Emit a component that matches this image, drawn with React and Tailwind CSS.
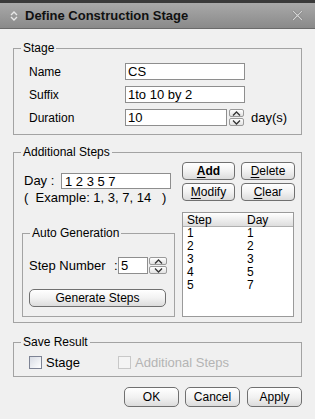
import React from "react";

const F = { fontFamily: '"Liberation Sans", Arial, sans-serif' };

function Btn({ children, className = "" }) {
  return (
    <div
      className={
        "flex items-center justify-center rounded-[4px] border border-[#707070] bg-gradient-to-b from-[#ffffff] via-[#f2f2f2] to-[#dcdcdc] text-[12px] leading-none text-black " +
        className
      }
    >
      {children}
    </div>
  );
}

function Chev({ up }) {
  return (
    <svg width="9" height="5" viewBox="0 0 9 5">
      <path
        d={up ? "M1 4.5 L4.5 1 L8 4.5" : "M1 0.5 L4.5 4 L8 0.5"}
        fill="none"
        stroke="#333"
        strokeWidth="1.3"
      />
    </svg>
  );
}

function Spinner({ className = "" }) {
  return (
    <div className={"flex flex-col gap-[1px] " + className}>
      <div className="flex flex-1 items-center justify-center rounded-[2px] border border-[#9a9a9a] bg-gradient-to-b from-white to-[#e2e2e2]">
        <Chev up />
      </div>
      <div className="flex flex-1 items-center justify-center rounded-[2px] border border-[#9a9a9a] bg-gradient-to-b from-white to-[#e2e2e2]">
        <Chev />
      </div>
    </div>
  );
}

function Input({ value, className = "" }) {
  return (
    <div
      className={
        "flex items-center border border-[#8e8e8e] bg-white pl-[2px] text-[13px] leading-none text-black " +
        className
      }
    >
      {value}
    </div>
  );
}

function Legend({ children }) {
  return (
    <legend className="ml-[7px] px-[2px] text-[12px] leading-[14px] text-black">
      {children}
    </legend>
  );
}

function Check({ disabled }) {
  return (
    <div
      className={
        "h-[13px] w-[13px] border " +
        (disabled
          ? "border-[#c8c8c8] bg-[#f4f4f4]"
          : "border-[#7d8394] bg-gradient-to-br from-[#d8dce4] to-white")
      }
    />
  );
}

export default function App() {
  return (
    <div className="h-[419px] w-[315px] overflow-hidden bg-[#f0f0f0] text-[12px] text-black" style={F}>
      {/* Title bar */}
      <div className="flex h-[29px] items-center border-t-[3px] border-b border-t-[#3a3a3a] border-b-[#6a6a6a] bg-gradient-to-b from-[#a9a9a9] to-[#8a8a8a] pl-[10px] pr-[11px]">
        <svg width="8" height="10" viewBox="0 0 8 10">
          <path d="M1 4 L4 1 L7 4" fill="none" stroke="#e8e8e8" strokeWidth="1.4" />
          <path d="M1 6 L4 9 L7 6" fill="none" stroke="#e8e8e8" strokeWidth="1.4" />
        </svg>
        <span className="ml-[7px] text-[13px] font-bold leading-none text-[#111]">
          Define Construction Stage
        </span>
        <svg className="ml-auto" width="13" height="11" viewBox="0 0 13 11">
          <path d="M2 1 L11 10 M11 1 L2 10" stroke="#6e6e6e" strokeWidth="2.2" />
          <path d="M2 1 L11 10 M11 1 L2 10" stroke="#d4d4d4" strokeWidth="1.2" />
        </svg>
      </div>

      <div className="px-[13px]">
        {/* Stage */}
        <fieldset className="mt-[12px] border border-[#a3a3a3] pb-[8px] pt-[8px]">
          <Legend>Stage</Legend>
          <div className="flex flex-col gap-[6px] pl-[15px]">
            <div className="flex h-[17px] items-center">
              <span className="w-[96px]">Name</span>
              <Input value="CS" className="h-[17px] w-[120px]" />
            </div>
            <div className="flex h-[17px] items-center">
              <span className="w-[96px]">Suffix</span>
              <Input value="1to 10 by 2" className="h-[17px] w-[120px]" />
            </div>
            <div className="flex h-[17px] items-center">
              <span className="w-[96px]">Duration</span>
              <Input value="10" className="h-[17px] w-[102px]" />
              <Spinner className="ml-[2px] h-[17px] w-[15px]" />
              <span className="ml-[7px] text-[13px]">day(s)</span>
            </div>
          </div>
        </fieldset>

        {/* Additional Steps */}
        <fieldset className="mt-[10px] border border-[#a3a3a3] pb-[5px]">
          <Legend>Additional Steps</Legend>
          <div className="flex">
            <div className="ml-[8px] flex w-[153px] flex-col pt-[14px]">
              <div className="flex h-[16px] items-center pl-[2px]">
                <span className="w-[37px] text-[13px]">Day :</span>
                <Input value="1 2 3 5 7" className="h-[16px] w-[110px] pl-[3px]" />
              </div>
              <div className="mt-[2px] whitespace-pre pl-[2px] text-[13px] leading-[14px]">
                {"(  Example: 1, 3, 7, 14   )"}
              </div>
              <fieldset className="mt-[21px] h-[91px] border border-[#a3a3a3] pt-[17px]">
                <Legend>Auto Generation</Legend>
                <div className="flex h-[17px] items-center pl-[6px]">
                  <span className="w-[85px] text-[13px]">Step Number</span>
                  <span className="w-[4px] text-[13px]">:</span>
                  <Input value="5" className="h-[17px] w-[30px]" />
                  <Spinner className="ml-[1px] h-[17px] w-[18px]" />
                </div>
                <div className="pl-[6px] pt-[15px]">
                  <Btn className="h-[18px] w-[137px] rounded-[5px]">Generate Steps</Btn>
                </div>
              </fieldset>
            </div>
            <div className="ml-[7px] flex w-[113px] flex-col pt-[3px]">
              <div className="flex gap-[6px]">
                <Btn className="h-[18px] w-[53px] font-bold">
                  <span className="underline underline-offset-2">A</span>dd
                </Btn>
                <Btn className="h-[18px] w-[54px]">
                  <span className="underline underline-offset-2">D</span>elete
                </Btn>
              </div>
              <div className="mt-[3px] flex gap-[6px]">
                <Btn className="h-[18px] w-[53px]">
                  <span className="underline underline-offset-2">M</span>odify
                </Btn>
                <Btn className="h-[18px] w-[54px]">
                  <span className="underline underline-offset-2">C</span>lear
                </Btn>
              </div>
              <div className="mt-[11px] h-[105px] w-[112px] border border-[#9a9a9a] bg-white">
                <div className="flex h-[14px] items-center border-b border-[#b0b0b0] bg-gradient-to-b from-white to-[#dedede] pl-[4px] text-[12px] leading-none">
                  <span className="w-[60px]">Step</span>
                  <span>Day</span>
                </div>
                {[
                  [1, 1],
                  [2, 2],
                  [3, 3],
                  [4, 5],
                  [5, 7],
                ].map(([s, d]) => (
                  <div key={s} className="flex h-[13px] items-center pl-[4px] text-[12px] leading-[13px]">
                    <span className="w-[60px]">{s}</span>
                    <span>{d}</span>
                  </div>
                ))}
              </div>
            </div>
          </div>
        </fieldset>

        {/* Save Result */}
        <fieldset className="mt-[12px] border border-[#a3a3a3] pb-[7px] pt-[7px]">
          <Legend>Save Result</Legend>
          <div className="flex h-[13px] items-center pl-[15px]">
            <Check />
            <span className="ml-[4px] w-[72px] text-[13px]">Stage</span>
            <Check disabled />
            <span className="ml-[4px] text-[13px] text-[#b4b4b4]">Additional Steps</span>
          </div>
        </fieldset>

        <div className="mt-[10px] flex justify-end">
          <Btn className="h-[20px] w-[55px] rounded-[5px]">OK</Btn>
          <Btn className="ml-[6px] h-[20px] w-[55px] rounded-[5px]">Cancel</Btn>
          <Btn className="ml-[7px] h-[20px] w-[55px] rounded-[5px]">Apply</Btn>
        </div>
      </div>
    </div>
  );
}
